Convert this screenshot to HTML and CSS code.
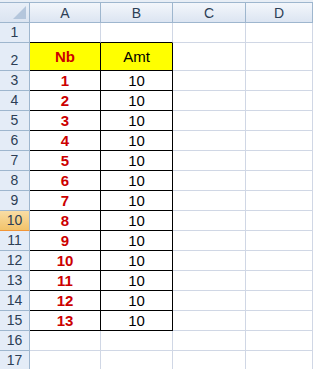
FILE: index.html
```html
<!DOCTYPE html>
<html lang="en">
<head>
    <meta charset="UTF-8">
    <title>Sheet1</title>
    <link rel="stylesheet" href="styles.css">
</head>
<body>
    <div class="top-strip"></div>

    <div class="sheet">
        <!-- column headers -->
        <div class="corner"><span class="corner-mark"></span></div>
        <div class="colhead">A</div>
        <div class="colhead">B</div>
        <div class="colhead">C</div>
        <div class="colhead">D</div>

        <div class="rowhead">1</div>
        <div class="cell edge-bottom"></div>
        <div class="cell edge-bottom"></div>
        <div class="cell"></div>
        <div class="cell"></div>

        <div class="rowhead">2</div>
        <div class="cell boxed title nb">Nb</div>
        <div class="cell boxed title">Amt</div>
        <div class="cell"></div>
        <div class="cell"></div>

        <div class="rowhead">3</div>
        <div class="cell boxed nb">1</div>
        <div class="cell boxed">10</div>
        <div class="cell"></div>
        <div class="cell"></div>

        <div class="rowhead">4</div>
        <div class="cell boxed nb">2</div>
        <div class="cell boxed">10</div>
        <div class="cell"></div>
        <div class="cell"></div>

        <div class="rowhead">5</div>
        <div class="cell boxed nb">3</div>
        <div class="cell boxed">10</div>
        <div class="cell"></div>
        <div class="cell"></div>

        <div class="rowhead">6</div>
        <div class="cell boxed nb">4</div>
        <div class="cell boxed">10</div>
        <div class="cell"></div>
        <div class="cell"></div>

        <div class="rowhead">7</div>
        <div class="cell boxed nb">5</div>
        <div class="cell boxed">10</div>
        <div class="cell"></div>
        <div class="cell"></div>

        <div class="rowhead">8</div>
        <div class="cell boxed nb">6</div>
        <div class="cell boxed">10</div>
        <div class="cell"></div>
        <div class="cell"></div>

        <div class="rowhead">9</div>
        <div class="cell boxed nb">7</div>
        <div class="cell boxed">10</div>
        <div class="cell"></div>
        <div class="cell"></div>

        <div class="rowhead active">10</div>
        <div class="cell boxed nb">8</div>
        <div class="cell boxed">10</div>
        <div class="cell"></div>
        <div class="cell"></div>

        <div class="rowhead">11</div>
        <div class="cell boxed nb">9</div>
        <div class="cell boxed">10</div>
        <div class="cell"></div>
        <div class="cell"></div>

        <div class="rowhead">12</div>
        <div class="cell boxed nb">10</div>
        <div class="cell boxed">10</div>
        <div class="cell"></div>
        <div class="cell"></div>

        <div class="rowhead">13</div>
        <div class="cell boxed nb">11</div>
        <div class="cell boxed">10</div>
        <div class="cell"></div>
        <div class="cell"></div>

        <div class="rowhead">14</div>
        <div class="cell boxed nb">12</div>
        <div class="cell boxed">10</div>
        <div class="cell"></div>
        <div class="cell"></div>

        <div class="rowhead">15</div>
        <div class="cell boxed nb">13</div>
        <div class="cell boxed">10</div>
        <div class="cell"></div>
        <div class="cell"></div>

        <div class="rowhead">16</div>
        <div class="cell"></div>
        <div class="cell"></div>
        <div class="cell"></div>
        <div class="cell"></div>

        <div class="rowhead">17</div>
        <div class="cell"></div>
        <div class="cell"></div>
        <div class="cell"></div>
        <div class="cell"></div>
    </div>
</body>
</html>
```

FILE: styles.css
```css
body {
    margin: 0;
    padding: 0;
    background-color: #ffffff;
    font-family: "Liberation Sans", Arial, sans-serif;
    overflow: hidden;
}

.top-strip {
    height: 2px;
    background-color: #e8eef6;
    border-bottom: 1px solid #9eb6ce;
}

.sheet {
    display: grid;
    grid-template-columns: 30px 71px 72px 73px 1fr;
    grid-template-rows: 20px 20px 28px;
    grid-auto-rows: 20px;
}

.sheet > div {
    box-sizing: border-box;
    border-right: 1px solid #d0d7e5;
    border-bottom: 1px solid #d0d7e5;
}

/* headers */
.corner {
    position: relative;
    background: linear-gradient(#e9eff8, #dbe4f1);
    border-right: 1px solid #9eb6ce !important;
    border-bottom: 1px solid #9eb6ce !important;
}

.corner-mark {
    position: absolute;
    right: 3px;
    bottom: 3px;
    width: 0;
    height: 0;
    border-left: 13px solid transparent;
    border-bottom: 13px solid #b4c6dc;
}

.colhead {
    display: flex;
    align-items: center;
    justify-content: center;
    background: linear-gradient(#f3f6fb, #dce5f2);
    border-right: 1px solid #9eb6ce !important;
    border-bottom: 1px solid #9eb6ce !important;
    color: #2c3e55;
    font-size: 14px;
}

.rowhead {
    display: flex;
    align-items: flex-end;
    justify-content: center;
    padding-bottom: 1px;
    background-color: #e4ecf7;
    border-right: 1px solid #9eb6ce !important;
    border-bottom: 1px solid #9eb6ce !important;
    color: #2c3e55;
    font-size: 14px;
    line-height: 17px;
}

.rowhead.active {
    background: linear-gradient(#f9dda5, #f2c36a);
    border-bottom-color: #f29536 !important;
}

/* data cells */
.cell {
    display: flex;
    align-items: flex-end;
    justify-content: center;
    padding-bottom: 1px;
    font-size: 15px;
    line-height: 17px;
    color: #000000;
}

.edge-bottom {
    border-bottom: 1px solid #000000 !important;
}

.boxed {
    border-right: 1px solid #000000 !important;
    border-bottom: 1px solid #000000 !important;
}

.title {
    align-items: center;
    padding-bottom: 0;
    background-color: #ffff00;
}

.nb {
    color: #cc0000;
    font-weight: bold;
}
```
